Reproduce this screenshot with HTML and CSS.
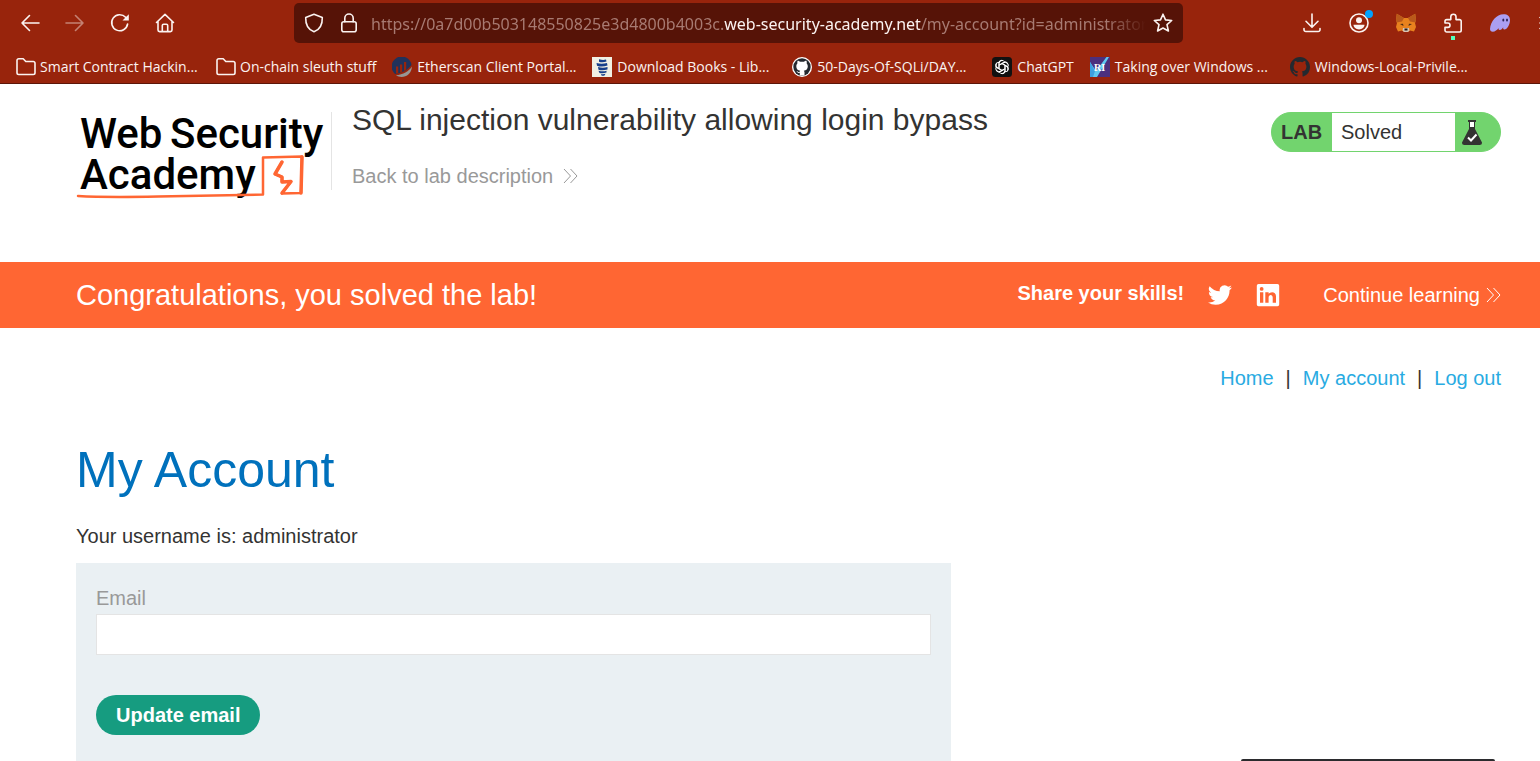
FILE: index.html
```html
<!DOCTYPE html>
<html lang="en">
<head>
<meta charset="utf-8">
<title>SQL injection vulnerability allowing login bypass</title>
<link rel="stylesheet" href="styles.css">
</head>
<body>
<header class="browser">
  <div class="toolbar">
    <div class="nav-buttons">
      <button class="tool" aria-label="Back"><svg viewBox="0 0 20 20"><path d="M19 10H2M9.500 2.500L2 10l7.500 7.500"/></svg></button>
      <button class="tool tool-off" aria-label="Forward" disabled><svg viewBox="0 0 20 20"><path d="M1 10h17M10.500 2.500L18 10l-7.500 7.500"/></svg></button>
      <button class="tool" aria-label="Reload"><svg viewBox="0 0 20 20"><path d="M17.600 11A8 8 0 1 1 15.600 4.300"/><path d="M18.800 1.200v6.300h-6.300z" fill="currentColor" stroke="none"/></svg></button>
      <button class="tool" aria-label="Home"><svg viewBox="0 0 20 20"><path d="M1.500 9.500L10 1.300l8.500 8.200M3 8.200V17a1.600 1.600 0 0 0 1.600 1.600h10.800A1.600 1.600 0 0 0 17 17V8.200M7.300 18.500v-6a1.300 1.300 0 0 1 1.300-1.300h2.800a1.300 1.300 0 0 1 1.300 1.300v6" /></svg></button>
    </div>
    <div class="url-bar">
      <svg class="url-icon" viewBox="0 0 20 20"><path d="M10 1.200l8.300 3.300c.2 6.500-2 12-8.300 14.300C3.700 16.500 1.500 11 1.700 4.500z"/></svg>
      <svg class="url-icon" viewBox="0 0 20 20"><rect x="2.800" y="8.800" width="14.400" height="10" rx="2"/><path d="M5.800 8.800V5.200a4.200 4.200 0 0 1 8.400 0v3.600"/></svg>
      <div class="url">https://0a7d00b503148550825e3d4800b4003c.<b>web-security-academy.net</b>/my-account?id=administrator</div>
      <button class="tool star" aria-label="Bookmark this page"><svg viewBox="0 0 20 20"><path d="M10 1.200l2.500 5.700 6.200.6-4.700 4.100 1.400 6.400L10 15l-5.400 3 1.400-6.400L1.300 7.500l6.200-.6z"/></svg></button>
    </div>
    <div class="extensions">
      <button class="tool" aria-label="Downloads"><svg viewBox="0 0 20 20"><path d="M10 1v13M4 8.300l6 6 6-6M2 15.500v1.200A1.800 1.800 0 0 0 3.800 18.500h12.400a1.800 1.800 0 0 0 1.800-1.800v-1.200"/></svg></button>
      <button class="tool" aria-label="Account"><svg viewBox="0 0 20 20"><circle cx="10" cy="10" r="9"/><circle cx="10" cy="7.300" r="3" fill="currentColor" stroke="none"/><path d="M4.500 11.800h11c0 2.500-2.300 4.700-5.500 4.700s-5.500-2.200-5.500-4.700z" fill="currentColor" stroke="none"/></svg><span class="dot"></span></button>
      <button class="tool" aria-label="MetaMask"><svg viewBox="0 0 20 20" stroke="none"><path d="M.8.800L8 5h4L19.200.800 20 7l-1 3 1 4-2 4.500-4-1-2 1.500H8l-2-1.500-4 1L0 14l1-4-1-3z" fill="#e8821e"/><path d="M.8.800L8 5 6 8.500.600 9.500 0 7zM19.200.800L12 5l2 3.500 5.400 1 .6-2.500z" fill="#b9591b"/><path d="M4 11l3-.3.500 2.300zM16 11l-3-.3-.5 2.300z" fill="#4a2b16"/><path d="M7 15h6l.5 2.500L12 19H8l-1.500-1.500z" fill="#d9c4b5"/><path d="M8.500 15.500h3v2h-3z" fill="#241c1a"/></svg></button>
      <button class="tool" aria-label="Extensions"><svg viewBox="0 0 20 20"><path d="M3.700 19h12.800A1.700 1.700 0 0 0 18.200 17.300V8.300a1.700 1.700 0 0 0-1.700-1.700H13V3.800a2.600 2.600 0 0 0-5.200 0v2.800H3.700A1.700 1.700 0 0 0 2 8.300V10h2.800a2.200 2.200 0 0 1 0 4.400H2v2.900A1.700 1.700 0 0 0 3.700 19z"/></svg><span class="notice"></span></button>
      <button class="tool" aria-label="Phantom"><svg viewBox="0 0 20 20" stroke="none"><path d="M0 16C.500 8.500 6.500 1.300 13.500 1.300c4 0 6.500 2 6.500 5.800 0 4.500-3 9.500-5.500 9.500-1.500 0-1.500-1.600-1.200-2.300-1 1.500-2.200 2.700-3.500 2.700-1.200 0-1.500-1-1.200-2-1.400 2-3.600 3.700-5.800 3.700C1 18.700 0 17.600 0 16z" fill="#ab9ff2"/><ellipse cx="13.300" cy="7" rx="1" ry="1.500" fill="#30265a"/><ellipse cx="17" cy="7" rx="1" ry="1.500" fill="#30265a"/></svg></button>
    </div>
    <button class="tool menu" aria-label="Menu"><svg viewBox="0 0 20 20"><path d="M1 4.500h18M1 10h18M1 15.500h18"/></svg></button>
  </div>
  <nav class="bookmarks" aria-label="Bookmarks">
    <a class="bookmark wide" href="#"><svg viewBox="0 0 20 20"><path d="M1 15.800V3.500A1.700 1.700 0 0 1 2.700 1.800h4.500l2.600 2.700h7.500A1.700 1.700 0 0 1 19 6.200v9.600a1.700 1.700 0 0 1-1.700 1.700H2.700A1.700 1.700 0 0 1 1 15.800z"/></svg>Smart Contract Hackin...</a>
    <a class="bookmark" href="#"><svg viewBox="0 0 20 20"><path d="M1 15.800V3.500A1.700 1.700 0 0 1 2.700 1.800h4.500l2.600 2.700h7.500A1.700 1.700 0 0 1 19 6.200v9.600a1.700 1.700 0 0 1-1.700 1.700H2.700A1.700 1.700 0 0 1 1 15.800z"/></svg>On-chain sleuth stuff</a>
    <a class="bookmark site wide" href="#"><svg viewBox="0 0 20 20" stroke="none"><path d="M3 17A10 10 0 1 1 19.500 8C15 14 9 16 3 17z" fill="#21325b"/><path d="M20 9.500C19.500 16 15 20 9.500 20c-2 0-4-.6-5.500-1.700C11 17.500 17 14.500 20 9.500z" fill="#979695"/><path d="M4 9.500h2.200V16L4 16.500zM8 7.500h2.200V15L8 15.500zM12 5h2.200v7.500L12 14z" fill="#98240c"/></svg>Etherscan Client Portal...</a>
    <a class="bookmark site wide" href="#"><svg viewBox="0 0 20 20" stroke="none"><path d="M0 0h20v20H0z" fill="#f1f0e4"/><path d="M7 2.200q4 1.300 7 .3l.5 2q-4 1.500-7.500.2zM4.500 6q5 1.500 10.500 0l.5 2.500q-5.500 2-10.500.2zM6 10q5 1.300 9.500 0v2.500q-5 1.500-9 .3zM6.500 13.800q5 1 8 0v1.800q-4 1.200-7 .3zM9 17q2.500.5 4.500-.2l-1 1.600q-2 .6-3 0z" fill="#173f8a"/></svg>Download Books - Lib...</a>
    <a class="bookmark site wide" href="#"><svg viewBox="0 0 20 20" stroke="none"><circle cx="10" cy="10" r="10" fill="#fff"/><circle cx="10" cy="10" r="8.700" fill="#24292f"/><path d="M7.800 18.500v-2.700c-2 .4-2.700-.5-3.300-1.800.9 0 1.500 1.300 3 1 .1-.7.400-1 .7-1.200-2.500-.4-3.900-1.700-3.900-4.500 0-1.300.4-2.200 1.100-2.900-.2-.9-.1-1.800.2-2.700 1.100 0 2 .7 2.700 1.100 1.200-.2 2.300-.2 3.500 0 .7-.5 1.600-1.100 2.700-1.100.3.900.4 1.800.2 2.700.700.8 1.100 1.700 1.100 2.900 0 2.800-1.500 4.100-4 4.500.5.500.7 1 .7 1.800v2.900z" fill="#fff"/></svg>50-Days-Of-SQLi/DAY...</a>
    <a class="bookmark site" href="#"><svg viewBox="0 0 20 20"><rect width="20" height="20" rx="3.500" fill="#111" stroke="none"/><g stroke="#fff" stroke-width="1" fill="none"><path id="petal" d="M7 10.800V6.300a3 3 0 0 1 5.600-1.500M7.500 8l4-2.300a3 3 0 0 1 4 .8"/><use href="#petal" transform="rotate(60 10 10)"/><use href="#petal" transform="rotate(120 10 10)"/><use href="#petal" transform="rotate(180 10 10)"/><use href="#petal" transform="rotate(240 10 10)"/><use href="#petal" transform="rotate(300 10 10)"/></g></svg>ChatGPT</a>
    <a class="bookmark site wide" href="#"><svg viewBox="0 0 20 20" stroke="none"><path d="M0 0h20v20H0z" fill="#4c2f7d"/><path d="M0 5l6 9L16.500 0H19L7 20H0z" fill="#5fc8f0"/><path d="M0 5l5 9-2 6H0z" fill="#3e9fe0"/><text x="4" y="14" class="badge-text">RI</text></svg>Taking over Windows ...</a>
    <a class="bookmark site wide" href="#"><svg viewBox="0 0 16 16" stroke="none"><path d="M8 0C3.580 0 0 3.580 0 8c0 3.540 2.290 6.530 5.470 7.590.4.070.55-.17.55-.38v-1.490c-2.010.37-2.530-.49-2.690-.94-.09-.23-.48-.94-.82-1.130-.28-.15-.68-.52-.01-.53.63-.01 1.080.58 1.230.82.72 1.210 1.870.87 2.330.66.07-.52.28-.87.51-1.070-1.780-.2-3.640-.89-3.640-3.950 0-.87.31-1.590.82-2.150-.08-.2-.36-1.020.08-2.120 0 0 .67-.21 2.200.82a7.600 7.600 0 0 1 4 0c1.530-1.040 2.200-.82 2.200-.82.44 1.100.16 1.920.08 2.120.51.56.82 1.270.82 2.150 0 3.070-1.870 3.750-3.650 3.950.29.25.54.73.54 1.480v2.200c0 .21.150.46.55.38A8 8 0 0 0 16 8c0-4.420-3.580-8-8-8z" fill="#24292f"/></svg>Windows-Local-Privile...</a>
  </nav>
</header>

<section class="lab-header">
  <a class="logo" href="#" aria-label="Web Security Academy">
    <svg viewBox="0 0 254 100">
      <text class="logo-text" x="4" y="36">Web</text>
      <text class="logo-text" x="94" y="36">Security</text>
      <text class="logo-text" x="4" y="77">Academy</text>
      <g fill="none" stroke="#ff6633" stroke-linecap="round" stroke-linejoin="round"><path stroke-width="2.500" d="M2 84q26 1.500 80 .5L187 82.500V45.500L226 44.500 225 81 206 81.500 215 69.500 206 70V65L199 62 206 50"/><path stroke-width="3.500" d="M226 45L225 81M206 50L199 62 206 65V70L215 69.500 206 81"/></g>
    </svg>
  </a>
  <div class="lab-title">
    <h2>SQL injection vulnerability allowing login bypass</h2>
    <a class="back" href="#">Back to lab description <svg class="chevrons" viewBox="0 0 15 16"><path d="M1 1l6.500 7L1 15M7.500 1L14 8l-6.500 7"/></svg></a>
  </div>
  <div class="status">
    <span class="status-label">LAB</span>
    <span class="status-value">Solved</span>
    <span class="status-icon"><svg viewBox="0 0 20 26"><path d="M7 1.500h6V9l7 13.500q0 2.500-2.500 2.500h-15Q0 25 0 22.500L7 9z" fill="#333332"/><path d="M8 2h4v5H8z" fill="#fff"/><path d="M6 0h8v2H6z" fill="#333332"/><path d="M6 17.500l3 3 5.500-6" fill="none" stroke="#fff" stroke-width="2"/></svg></span>
  </div>
</section>

<section class="banner">
  <h4>Congratulations, you solved the lab!</h4>
  <div class="share">
    <span class="share-text">Share your skills!</span>
    <a href="#" aria-label="Twitter"><svg viewBox="0 0 24 24"><path fill="#fff" d="M23.950 4.570a10 10 0 0 1-2.820.78 4.960 4.960 0 0 0 2.160-2.730 9.900 9.900 0 0 1-3.130 1.190 4.920 4.920 0 0 0-8.380 4.480A13.930 13.930 0 0 1 1.640 3.160a4.920 4.920 0 0 0 1.520 6.570 4.900 4.900 0 0 1-2.230-.61v.06a4.920 4.920 0 0 0 3.950 4.830 5 5 0 0 1-2.210.08 4.940 4.940 0 0 0 4.600 3.420A9.870 9.870 0 0 1 0 19.540a13.940 13.940 0 0 0 7.550 2.210c9.050 0 14-7.500 14-13.980 0-.21 0-.42-.02-.63a9.900 9.900 0 0 0 2.420-2.570z"/></svg></a>
    <a href="#" aria-label="LinkedIn"><svg viewBox="0 0 24 24"><path fill="#fff" fill-rule="evenodd" d="M2.500 1h19A1.700 1.700 0 0 1 23.200 2.700v18.800a1.700 1.700 0 0 1-1.700 1.700h-19A1.700 1.700 0 0 1 .8 21.500V2.700A1.700 1.700 0 0 1 2.500 1zM4 9.300V19.800h3.300V9.300zM5.650 4a1.900 1.900 0 1 0 0 3.800 1.900 1.900 0 0 0 0-3.800zM9.300 9.300v10.500h3.300v-5.200c0-3.400 4.100-3.500 4.100 0v5.200H20v-6.500c0-5-5.400-5-7.400-2.500V9.300z"/></svg></a>
  </div>
  <a class="continue" href="#">Continue learning <svg class="chevrons" viewBox="0 0 15 16"><path d="M1 1l6.500 7L1 15M7.500 1L14 8l-6.500 7"/></svg></a>
</section>

<main class="page">
  <nav class="account-nav">
    <a href="#">Home</a><span>|</span><a href="#">My account</a><span>|</span><a href="#">Log out</a>
  </nav>
  <h1>My Account</h1>
  <p class="username">Your username is: administrator</p>
  <form class="panel">
    <label for="email">Email</label>
    <input id="email" type="email">
    <button class="update" type="button">Update email</button>
  </form>
</main>
<div class="drawer"></div>
</body>
</html>
```
FILE: styles.css
```css
* { box-sizing: border-box; }

body {
  margin: 0;
  min-height: 100vh;
  display: flex;
  flex-direction: column;
  background: #fff;
  color: #333332;
  font: 20px/24px "Liberation Sans", Arial, sans-serif;
}

a { color: inherit; text-decoration: none; }
button { font: inherit; border: 0; cursor: pointer; }
h1, h2, h4, p { margin: 0; font-weight: 400; }
svg { display: block; flex: none; }

/* Browser chrome */
.browser {
  height: 84px;
  background: #98240c;
  border-bottom: 1px solid #5c1609;
  color: #fbf3f1;
  overflow: hidden;
}
.toolbar {
  display: flex;
  align-items: center;
  padding: 3px 0 0 20px;
}
.nav-buttons, .extensions { display: flex; }
.nav-buttons { gap: 25px; margin-right: 119px; }
.extensions { gap: 27px; margin-left: auto; }
.menu { margin: 0 -19px 0 29px; }
.tool {
  position: relative;
  flex: none;
  width: 20px;
  height: 20px;
  padding: 0;
  background: none;
  color: inherit;
}
.tool-off { opacity: 0.45; }
.tool svg, .url-icon, .bookmark svg {
  width: 20px;
  height: 20px;
  fill: none;
  stroke: currentColor;
  stroke-width: 1.6;
  stroke-linejoin: round;
  stroke-linecap: round;
}
.tool svg[stroke="none"], .bookmark svg[stroke="none"] { stroke: none; }
.dot {
  position: absolute;
  top: -3px;
  right: -4px;
  width: 8px;
  height: 8px;
  border-radius: 50%;
  background: #00a2ff;
}
.notice {
  position: absolute;
  left: 8px;
  top: 23px;
  width: 4px;
  height: 4px;
  background: #54ffbd;
}
.url-bar {
  flex: 0 1 889px;
  min-width: 0;
  height: 40px;
  display: flex;
  align-items: center;
  padding: 0 10px;
  border-radius: 5px;
  background: #561307;
}
.url-icon { margin-right: 15px; }
.url {
  flex: 1;
  margin-right: 7px;
  margin-left: -3px;
  padding-top: 2px;
  overflow: hidden;
  white-space: nowrap;
  font: 16px/24px "Noto Sans", "Open Sans", sans-serif;
  color: #a77a72;
  mask-image: linear-gradient(to left, transparent, #000 40px);
}
.url b { font-weight: 400; color: #fbf3f1; }

.bookmarks {
  display: flex;
  padding: 13px 0 0 16px;
  font: 14px/21px "Open Sans", "Noto Sans", sans-serif;
  white-space: nowrap;
}
.bookmark {
  flex: none;
  display: flex;
  align-items: center;
  gap: 4px;
  padding-right: 16px;
}
.bookmark.site { gap: 5px; }
.wide { width: 200px; }
.badge-text { font: bold 10px "Liberation Serif", serif; fill: #fff; }

/* Lab header */
.lab-header {
  display: flex;
  align-items: flex-start;
  height: 178px;
  padding: 20px 39px 0 76px;
}
.logo {
  margin-top: 8px;
  padding-right: 1px;
  height: 78px;
  border-right: 1px solid #e4e4e4;
}
.logo svg { width: 254px; height: 100px; }
.logo-text { font: 500 42px Roboto, sans-serif; fill: #000; }
.lab-title { padding-left: 20px; }
.lab-title h2 { font-size: 30px; line-height: 32px; }
.back {
  display: flex;
  align-items: center;
  gap: 10px;
  margin-top: 28px;
  color: #999;
}
.chevrons {
  width: 15px;
  height: 16px;
  fill: none;
  stroke: currentColor;
}
.status {
  display: flex;
  width: 230px;
  height: 40px;
  margin: 8px 0 0 auto;
  border: 1px solid #72d46e;
  border-radius: 20px;
  background: #72d46e;
  line-height: 38px;
  overflow: hidden;
}
.status-label { width: 60px; padding-left: 9px; font-weight: 700; }
.status-value { flex: 1; padding-left: 9px; background: #fff; }
.status-icon { width: 45px; padding: 7px 0 0 7px; }
.status-icon svg { width: 20px; height: 26px; }

/* Solved banner */
.banner {
  display: flex;
  align-items: center;
  min-height: 66px;
  padding: 0 39px 0 76px;
  background: #ff6633;
  color: #fff;
}
.banner h4 { font-size: 29px; line-height: 32px; }
.share {
  display: flex;
  align-items: center;
  gap: 24px;
  margin: 0 43px 0 auto;
}
.share svg { width: 24px; height: 24px; }
.share-text { padding-bottom: 4px; font-weight: 700; }
.continue { display: flex; align-items: center; gap: 6px; }

/* Account page */
.page {
  flex: 1;
  display: flex;
  flex-direction: column;
  padding: 38px 39px 0 76px;
}
.account-nav { display: flex; justify-content: flex-end; gap: 12px; }
.account-nav a { color: #29abe2; }
.page h1 {
  margin-top: 52px;
  font-size: 50px;
  line-height: 56px;
  color: #0071bc;
}
.username { margin: 26px 0 15px; }
.panel {
  flex: 1;
  display: flex;
  flex-direction: column;
  align-items: flex-start;
  width: 875px;
  max-width: 100%;
  padding: 23px 20px 26px;
  background: #eaf0f3;
}
.panel label { color: #999; }
.panel input {
  width: 100%;
  height: 41px;
  margin: 4px 0 40px;
  padding: 0 10px;
  border: 1px solid #e4e4e4;
  background: #fff;
  font: inherit;
}
.update {
  height: 40px;
  padding: 0 20px;
  border-radius: 20px;
  background: #169c80;
  color: #fff;
  font-weight: 700;
}

/* Top edge of the collapsed drawer */
.drawer {
  position: fixed;
  right: 45px;
  bottom: 0;
  width: 254px;
  height: 2px;
  border-radius: 4px 4px 0 0;
  background: #2b2b2e;
}
```
